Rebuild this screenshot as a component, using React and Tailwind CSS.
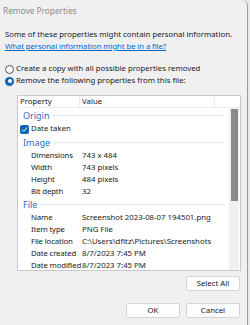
import React from "react";

const font = { fontFamily: '"Noto Sans", "Open Sans", sans-serif' };

function GroupHeader({ label }) {
  return (
    <div className="flex items-center h-[13px] mb-[1px] pl-[5px] pr-[6px]">
      <span className="text-[#2f6bc0] text-[9px] leading-none">{label}</span>
      <div className="flex-1 h-px bg-[#dce6f3] ml-[3px] mt-[-1px]" />
    </div>
  );
}

function Row({ label, value }) {
  return (
    <div className="flex items-center h-[12px] text-[7.8px] leading-none text-[#1a1a1a]">
      <span className="w-[64px] pl-[13px] shrink-0 whitespace-nowrap tracking-[-0.15px]">{label}</span>
      <span className="whitespace-nowrap">{value}</span>
    </div>
  );
}

function Button({ children }) {
  return (
    <div className="w-[54px] h-[15px] bg-[#fdfdfd] border border-[#d4d4d4] rounded-[2px] flex items-center justify-center text-[7.8px] leading-none text-[#1a1a1a]">
      {children}
    </div>
  );
}

export default function App() {
  return (
    <div className="w-[250px] h-[325px] bg-[#e9e9e9] flex overflow-hidden" style={font}>
      <div className="w-[248px] h-[325px] bg-[#f0f0f0] border-r border-[#9a9a9a] rounded-tr-[6px] flex flex-col">
        <div className="h-[23px] flex items-center pl-[3px] text-[8.3px] text-[#8a8a8a] leading-none">
          Remove Properties
        </div>
        <div className="pl-[5px] pt-[6px] text-[7.8px] leading-none text-[#1a1a1a]">
          <div className="h-[11px] flex items-center">Some of these properties might contain personal information.</div>
          <div className="h-[13px] flex items-center">
            <span className="text-[#0066cc] underline tracking-[-0.1px]">What personal information might be in a file?</span>
          </div>
        </div>
        <div className="pt-[10px] text-[7.8px] leading-none text-[#1a1a1a]">
          <div className="flex items-center h-[12px] pl-[5px]">
            <div className="w-[9px] h-[9px] rounded-full border border-[#555] bg-[#fafafa] mr-[2px]" />
            <span>Create a copy with all possible properties removed</span>
          </div>
          <div className="flex items-center h-[12px] pl-[5px]">
            <div className="w-[9px] h-[9px] rounded-full bg-[#0a64b8] mr-[2px] flex items-center justify-center">
              <div className="w-[4px] h-[4px] rounded-full bg-white" />
            </div>
            <span>Remove the following properties from this file:</span>
          </div>
        </div>
        <div className="ml-[17px] mt-[8px] w-[224px] h-[176px] border border-[#c9c9c9] bg-white flex flex-col overflow-hidden">
          <div className="flex h-[12px] items-center text-[7.8px] leading-none text-[#1a1a1a] border-b border-[#eeeeee]">
            <div className="w-[62px] pl-[2px] h-full flex items-center border-r border-[#ececec]">Property</div>
            <div className="w-[135px] pl-[2px] h-full flex items-center border-r border-[#ececec]">Value</div>
          </div>
          <div className="flex flex-1 min-h-0">
            <div className="flex-1 min-w-0 pt-[1px]">
              <GroupHeader label="Origin" />
              <div className="flex items-center h-[12px] text-[7.8px] leading-none text-[#1a1a1a] pl-[2px]">
                <div className="w-[9px] h-[9px] rounded-[2px] bg-[#0a64b8] flex items-center justify-center mr-[2px]">
                  <svg width="7" height="7" viewBox="0 0 7 7">
                    <path d="M1 3.6 L2.8 5.3 L6 1.6" fill="none" stroke="white" strokeWidth="1" />
                  </svg>
                </div>
                <span>Date taken</span>
              </div>
              <div className="h-[1px]" />
              <GroupHeader label="Image" />
              <Row label="Dimensions" value="743 x 484" />
              <Row label="Width" value="743 pixels" />
              <Row label="Height" value="484 pixels" />
              <Row label="Bit depth" value="32" />
              <GroupHeader label="File" />
              <Row label="Name" value="Screenshot 2023-08-07 194501.png" />
              <Row label="Item type" value="PNG File" />
              <Row label="File location" value="C:\Users\dfitz\Pictures\Screenshots" />
              <Row label="Date created" value="8/7/2023 7:45 PM" />
              <Row label="Date modified" value="8/7/2023 7:45 PM" />
            </div>
            <div className="w-[10px] bg-[#f0f0f0] flex justify-center pt-[1px] mr-[1px]">
              <div className="w-[7px] h-[92px] bg-[#8a8a8a]" />
            </div>
          </div>
        </div>
        <div className="flex justify-end pr-[7px] mt-[5px]">
          <Button>Select All</Button>
        </div>
        <div className="flex justify-end gap-[6px] pr-[7px] mt-[12px]">
          <Button>OK</Button>
          <Button>Cancel</Button>
        </div>
      </div>
    </div>
  );
}
